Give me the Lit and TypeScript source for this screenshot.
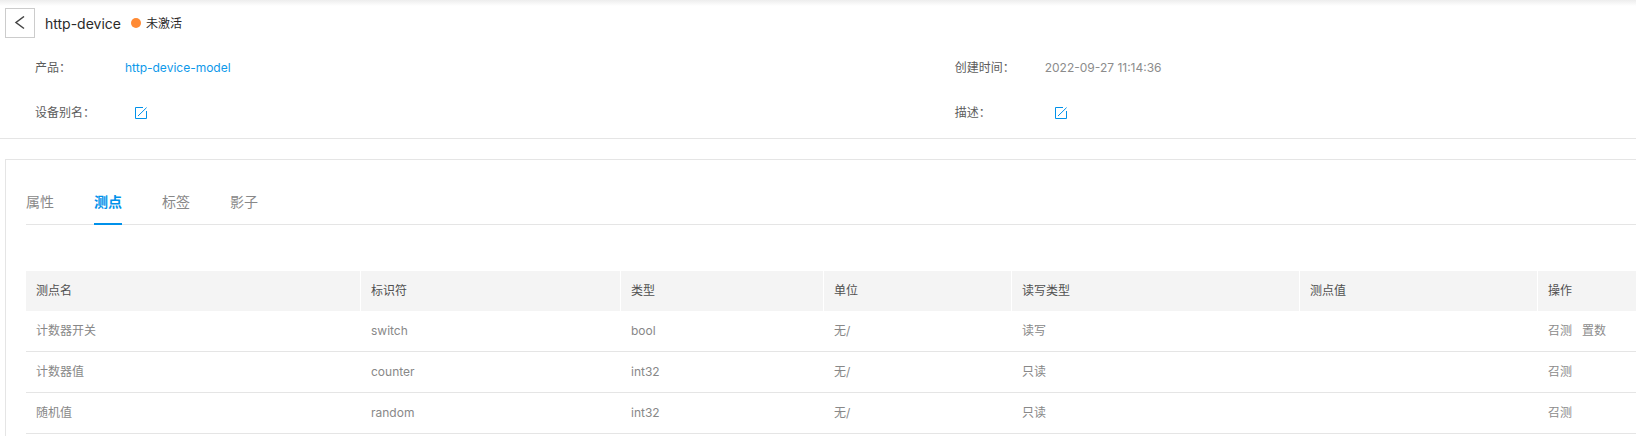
import { LitElement, html, css, svg } from "lit";
import { customElement, property, state } from "lit/decorators.js";
import { classMap } from "lit/directives/class-map.js";

interface Point {
  name: string;
  id: string;
  type: string;
  unit: string;
  access: string;
  value: string;
  actions: string[];
}

const COLUMNS = [
  { title: "测点名", weight: 335 },
  { title: "标识符", weight: 260 },
  { title: "类型", weight: 203 },
  { title: "单位", weight: 188 },
  { title: "读写类型", weight: 288 },
  { title: "测点值", weight: 238 },
  { title: "操作", weight: 98 },
];
const TOTAL = COLUMNS.reduce((sum, c) => sum + c.weight, 0);

const POINTS: Point[] = [
  { name: "计数器开关", id: "switch", type: "bool", unit: "无/", access: "读写", value: "", actions: ["召测", "置数"] },
  { name: "计数器值", id: "counter", type: "int32", unit: "无/", access: "只读", value: "", actions: ["召测"] },
  { name: "随机值", id: "random", type: "int32", unit: "无/", access: "只读", value: "", actions: ["召测"] },
];

const editIcon = svg`
  <svg viewBox="0 0 12 12" width="12" height="12" aria-hidden="true">
    <path d="M8 .5H.5V11.5H11.5V4M3 9L11.6 .6" fill="none" stroke="currentColor" />
  </svg>`;

@customElement("device-header")
class DeviceHeader extends LitElement {
  static styles = css`
    :host {
      display: block;
      border-bottom: 1px solid #e5e5e5;
      background: linear-gradient(#ededed, #fff 6px);
    }
    button {
      font: inherit;
      padding: 0;
      cursor: pointer;
    }
    .title {
      display: flex;
      align-items: center;
      padding: 8px 5px 0;
    }
    .back {
      display: flex;
      align-items: center;
      justify-content: center;
      width: 30px;
      height: 30px;
      margin-right: 10px;
      border: 1px solid #ccc;
      background: #fff;
      color: #444;
    }
    .name,
    .status {
      margin: 0;
      padding-top: 2px;
      font-weight: 400;
      color: #2a2a2a;
    }
    .name {
      font-size: 14px;
    }
    .dot {
      width: 10px;
      height: 10px;
      margin: 0 5px 0 10px;
      border-radius: 50%;
      background: #ff8a34;
    }
    .info {
      display: grid;
      grid-template-columns: 27fr 20fr;
      row-gap: 25px;
      margin: 0;
      padding: 20px 0 15px 35px;
    }
    .field {
      display: flex;
      align-items: center;
      height: 20px;
    }
    dt {
      width: 90px;
      color: #5c5c5c;
    }
    dd {
      margin: 0;
      color: #8c8c8c;
    }
    a {
      color: #0d99ea;
      text-decoration: none;
    }
    .edit {
      display: flex;
      margin-left: 10px;
      border: 0;
      background: none;
      color: #0091ea;
    }
  `;

  render() {
    return html`
      <div class="title">
        <button class="back" aria-label="返回">
          <svg viewBox="0 0 12 14" width="12" height="14" aria-hidden="true">
            <path d="M10 .5L2 6.5L10 12.5" fill="none" stroke="currentColor" stroke-width="1.5" />
          </svg>
        </button>
        <h1 class="name">http-device</h1>
        <span class="dot"></span>
        <span class="status">未激活</span>
      </div>
      <dl class="info">
        <div class="field"><dt>产品：</dt><dd><a href="#model">http-device-model</a></dd></div>
        <div class="field"><dt>创建时间：</dt><dd>2022-09-27 11:14:36</dd></div>
        <div class="field"><dt>设备别名：</dt><dd><button class="edit" aria-label="编辑设备别名">${editIcon}</button></dd></div>
        <div class="field"><dt>描述：</dt><dd><button class="edit" aria-label="编辑描述">${editIcon}</button></dd></div>
      </dl>
    `;
  }
}

@customElement("point-table")
class PointTable extends LitElement {
  @property({ attribute: false }) points: Point[] = [];

  static styles = css`
    :host {
      display: block;
    }
    table {
      width: 100%;
      table-layout: fixed;
      border-collapse: separate;
      border-spacing: 0;
    }
    th,
    td {
      height: 40px;
      box-sizing: content-box;
      padding: 0 10px;
      text-align: left;
      font-weight: 400;
      white-space: nowrap;
    }
    th {
      background: #f4f4f4;
      color: #505050;
    }
    th:not(:last-child) {
      border-right: 1px solid #fff;
    }
    td {
      border-bottom: 1px solid #e5e5e5;
      color: #888;
    }
    .actions {
      display: flex;
      gap: 10px;
    }
    button {
      padding: 0;
      border: 0;
      background: none;
      font: inherit;
      color: #8c8c8c;
      cursor: pointer;
    }
  `;

  render() {
    return html`
      <table>
        <colgroup>
          ${COLUMNS.map((c) => html`<col style="width:${(c.weight / TOTAL) * 100}%" />`)}
        </colgroup>
        <thead>
          <tr>${COLUMNS.map((c) => html`<th scope="col">${c.title}</th>`)}</tr>
        </thead>
        <tbody>
          ${this.points.map(
            (p) => html`<tr>
              <td>${p.name}</td>
              <td>${p.id}</td>
              <td>${p.type}</td>
              <td>${p.unit}</td>
              <td>${p.access}</td>
              <td>${p.value}</td>
              <td><div class="actions">${p.actions.map((a) => html`<button>${a}</button>`)}</div></td>
            </tr>`,
          )}
        </tbody>
      </table>
    `;
  }
}

@customElement("app-root")
class AppRoot extends LitElement {
  @state() private active = "测点";

  static styles = css`
    :host {
      display: block;
      overflow: hidden;
      background: #fff;
      font: 12px/20px Inter, "Noto Sans CJK SC", sans-serif;
    }
    .card {
      margin: 20px 0 0 5px;
      padding: 20px 0 2px 20px;
      border: solid #e5e5e5;
      border-width: 1px 0 0 1px;
    }
    .tabs {
      display: flex;
      gap: 40px;
      margin-bottom: 46px;
      box-shadow: inset 0 -1px #e5e5e5;
    }
    .tab {
      height: 45px;
      padding: 0;
      border: 0;
      border-bottom: 2px solid transparent;
      background: none;
      font: inherit;
      font-size: 14px;
      color: #888;
      cursor: pointer;
    }
    .tab.active {
      border-bottom-color: #0091ea;
      color: #0091ea;
      font-weight: 700;
    }
  `;

  render() {
    return html`
      <device-header></device-header>
      <section class="card">
        <div class="tabs" role="tablist">
          ${["属性", "测点", "标签", "影子"].map(
            (t) => html`<button
              role="tab"
              aria-selected=${t === this.active ? "true" : "false"}
              class=${classMap({ tab: true, active: t === this.active })}
              @click=${() => (this.active = t)}
            >${t}</button>`,
          )}
        </div>
        <point-table .points=${POINTS}></point-table>
      </section>
    `;
  }
}
